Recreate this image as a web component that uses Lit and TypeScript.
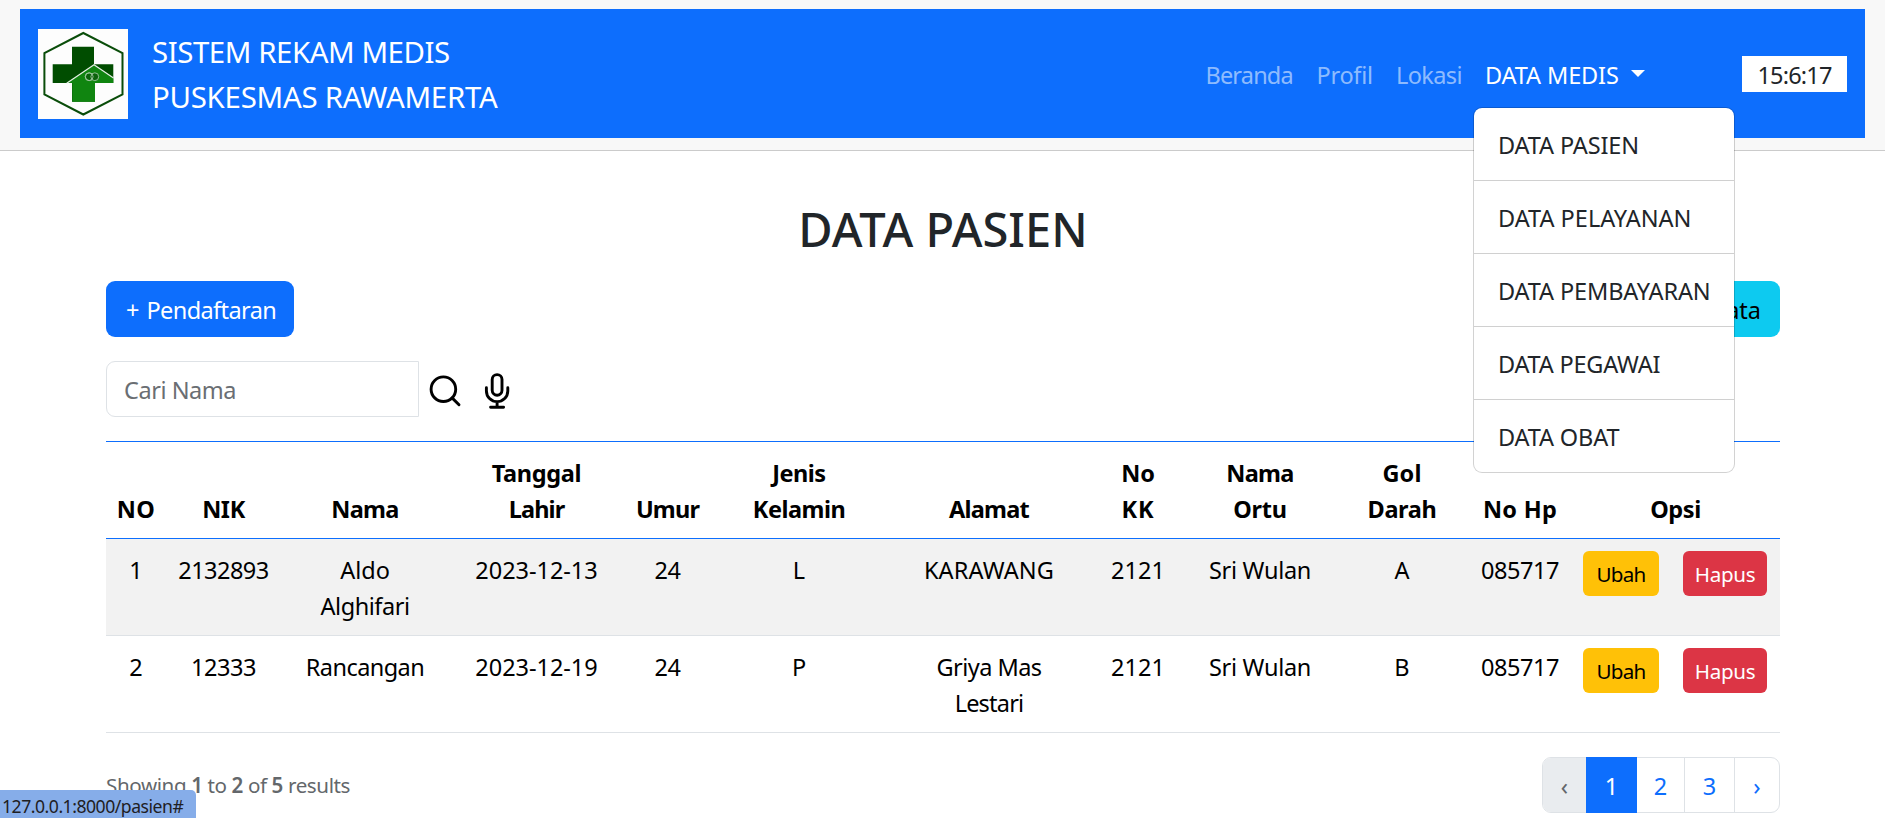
import { LitElement, html, css, nothing } from "lit";
import { customElement } from "lit/decorators.js";
import { styleMap } from "lit/directives/style-map.js";

// Tracking (px) per label, so that each one keeps its intended width.
const TRACKING: Record<string, number> = {
  "SISTEM REKAM MEDIS": -0.44, "PUSKESMAS RAWAMERTA": -0.26,
  Beranda: -0.83, Profil: -0.27, Lokasi: -0.61, "DATA MEDIS": -0.13, "15:6:17": -0.82,
  "DATA PASIEN": -0.13, "DATA PELAYANAN": 0, "DATA PEMBAYARAN": -0.13,
  "DATA PEGAWAI": -0.22, "DATA OBAT": -0.15, Pendaftaran: -0.6, "Cari Nama": -0.45,
  NO: 0.3, NIK: -0.38, Nama: -0.71, Tanggal: -0.31, Lahir: -0.89, Umur: -0.83,
  Jenis: -0.53, Kelamin: -0.5, Alamat: -0.78, No: -0.12, KK: 0.9, Ortu: -0.27,
  Gol: 0.14, Darah: -0.36, "No Hp": 0.3, Opsi: -0.42,
  "2132893": -0.53, "12333": -0.45, Aldo: -0.02, Alghifari: -0.46, Rancangan: -0.56,
  "2023-12-13": -0.03, "2023-12-19": -0.03, "24": -0.45, KARAWANG: 0.12,
  "Griya Mas": -0.53, Lestari: -0.79, "2121": 0, "Sri Wulan": -0.28, "085717": -0.45,
  Ubah: -0.7, Hapus: -0.29, "127.0.0.1:8000/pasien#": -0.48,
};

const label = (text: string) =>
  html`<span style=${styleMap({ letterSpacing: `${TRACKING[text] ?? 0}px` })}>${text}</span>`;

const lines = (items: string[]) => items.map((t, i) => html`${i ? html`<br />` : nothing}${label(t)}`);

const COLUMNS: { head: string[]; width: number }[] = [
  { head: ["NO"], width: 60 },
  { head: ["NIK"], width: 115 },
  { head: ["Nama"], width: 168 },
  { head: ["Tanggal", "Lahir"], width: 175 },
  { head: ["Umur"], width: 87 },
  { head: ["Jenis", "Kelamin"], width: 176 },
  { head: ["Alamat"], width: 204 },
  { head: ["No", "KK"], width: 94 },
  { head: ["Nama", "Ortu"], width: 150 },
  { head: ["Gol", "Darah"], width: 134 },
  { head: ["No Hp"], width: 102 },
  { head: ["Opsi"], width: 209 },
];

const ROWS: string[][][] = [
  [["1"], ["2132893"], ["Aldo", "Alghifari"], ["2023-12-13"], ["24"], ["L"], ["KARAWANG"], ["2121"], ["Sri Wulan"], ["A"], ["085717"]],
  [["2"], ["12333"], ["Rancangan"], ["2023-12-19"], ["24"], ["P"], ["Griya Mas", "Lestari"], ["2121"], ["Sri Wulan"], ["B"], ["085717"]],
];

const MENU = ["DATA PASIEN", "DATA PELAYANAN", "DATA PEMBAYARAN", "DATA PEGAWAI", "DATA OBAT"];

@customElement("app-navbar")
class AppNavbar extends LitElement {
  static styles = css`
    :host { display: block; }
    .header {
      box-sizing: border-box; height: 151px; padding: 9px 20px 12px;
      background: #f8f8f8; border-bottom: 1px solid #cbcbcb;
    }
    .bar {
      box-sizing: border-box; height: 129px; padding: 20px 18px 0; display: flex;
      align-items: flex-start; background: #0d6efd; color: #fff;
    }
    .logo { display: block; width: 90px; height: 90px; }
    .brand { margin: 1px 0 0 24px; flex: 1; font-size: 29.4px; line-height: 45px; white-space: nowrap; }
    .nav { display: grid; grid-template-columns: 111px 79.5px 89px 161px; margin-top: 28px; line-height: 36px; white-space: nowrap; }
    .link { color: rgba(255, 255, 255, 0.55); }
    .active { position: relative; display: flex; align-items: flex-start; }
    .caret { margin: 13px 0 0 12px; border: 7px solid transparent; border-top-color: #fff; border-bottom: 0; }
    .clock { margin: 27px 0 0 96px; width: 105px; height: 36px; line-height: 38px; background: #fff; color: #212529; text-align: center; }
    .menu {
      position: absolute; z-index: 5; top: 50px; left: -12px; box-sizing: border-box; width: 262px;
      background: #fff; background-clip: padding-box; border: 1px solid rgba(0, 0, 0, 0.175);
      border-radius: 9px; color: #212529;
    }
    .item { padding: 19px 20px 17px 24px; border-bottom: 1px solid #d0d0d0; }
    .item:last-child { border-bottom: 0; }
  `;

  render() {
    return html`
      <header class="header">
        <div class="bar">
          <svg class="logo" viewBox="0 0 90 90">
            <rect width="90" height="90" fill="#fdfdfd" />
            <path d="M45.3 4 84.5 24.2V65.3L45.3 85.5 6.4 65.3V24.2Z" fill="none" stroke="#0a4d0a" stroke-width="2" />
            <path d="M34 17.7H56V35.2H75.3V54H57V72.7H34V54H14.7V35.2H34Z" fill="#004d00" />
            <path d="M29.7 54 56 36 75.3 49.5V54H57V72.7H34.3V54Z" fill="#108510" />
            <path d="M28.7 54.2 56 35.7 75.5 49" fill="none" stroke="#e4f1e4" stroke-width="1.3" />
            <g fill="none" stroke="#9fc79f" stroke-width="0.9">
              <circle cx="51.2" cy="47.7" r="3.9" fill="#0b620b" />
              <circle cx="56.8" cy="47.7" r="3.9" fill="#0b620b" />
              <circle cx="51.2" cy="47.7" r="3.9" />
            </g>
          </svg>
          <div class="brand">${lines(["SISTEM REKAM MEDIS", "PUSKESMAS RAWAMERTA"])}</div>
          <nav class="nav">
            <a class="link">${label("Beranda")}</a>
            <a class="link">${label("Profil")}</a>
            <a class="link">${label("Lokasi")}</a>
            <div class="active">
              ${label("DATA MEDIS")}<i class="caret"></i>
              <div class="menu">${MENU.map((m) => html`<div class="item">${label(m)}</div>`)}</div>
            </div>
          </nav>
          <div class="clock">${label("15:6:17")}</div>
        </div>
      </header>
    `;
  }
}

@customElement("patient-table")
class PatientTable extends LitElement {
  static styles = css`
    :host { display: block; }
    .table { width: 1674px; table-layout: fixed; border-collapse: separate; border-spacing: 0; border-top: 1px solid #0d6efd; color: #000; line-height: 36px; text-align: center; }
    .cell { box-sizing: border-box; height: 97px; padding: 13px 0 11px; vertical-align: top; border-bottom: 1px solid #dee2e6; white-space: nowrap; }
    .head { vertical-align: bottom; font-weight: 700; border-bottom-color: #0d6efd; }
    .row:nth-child(odd) .cell { background: #f2f2f2; }
    .actions { padding: 12px 13px 0 12px; }
    .buttons { display: flex; justify-content: space-between; }
    .button { box-sizing: border-box; height: 45px; border-radius: 6px; font-size: 20.6px; line-height: 46px; }
    .edit { width: 76px; background: #ffc107; color: #000; }
    .delete { width: 84px; background: #dc3545; color: #fff; }
  `;

  render() {
    return html`
      <table class="table">
        <colgroup>${COLUMNS.map((c) => html`<col style=${styleMap({ width: `${c.width}px` })} />`)}</colgroup>
        <thead><tr>${COLUMNS.map((c) => html`<th class="cell head">${lines(c.head)}</th>`)}</tr></thead>
        <tbody>
          ${ROWS.map((row) => html`
            <tr class="row">
              ${row.map((cell) => html`<td class="cell">${lines(cell)}</td>`)}
              <td class="cell actions">
                <div class="buttons">
                  <div class="button edit">${label("Ubah")}</div>
                  <div class="button delete">${label("Hapus")}</div>
                </div>
              </td>
            </tr>`)}
        </tbody>
      </table>
    `;
  }
}

@customElement("app-root")
class AppRoot extends LitElement {
  static styles = css`
    :host {
      display: block; position: relative; height: 818px; overflow: hidden; background: #fff; color: #212529;
      font: 23.5px/36px "Noto Sans", "Open Sans", sans-serif;
    }
    .content { width: 1674px; margin-left: 106px; }
    .title { margin: 0; padding: 49px 0 23px; font-size: 47px; line-height: 58px; font-weight: 500; text-align: center; }
    .toolbar { display: flex; justify-content: space-between; height: 56px; line-height: 58px; }
    .primary { box-sizing: border-box; width: 188px; display: flex; gap: 7px; padding-left: 20px; border-radius: 9px; background: #0d6efd; color: #fff; }
    .export { padding: 0 19px 0 22px; border-radius: 9px; background: #0dcaf0; color: #000; }
    .search { display: flex; align-items: center; height: 56px; margin: 24px 0; }
    .field { box-sizing: border-box; width: 313px; height: 56px; padding-left: 17px; border: 1px solid #dee2e6; border-radius: 9px 0 0 9px; color: #6a6e73; line-height: 57px; }
    .icon { width: 40px; height: 40px; margin-left: 7px; fill: none; stroke: #000; stroke-width: 2.9; stroke-linecap: round; }
    .mic { margin-left: 12px; }
    .footer { display: flex; justify-content: space-between; align-items: flex-start; margin-top: 24px; }
    .summary { margin-top: 10px; font-size: 20.6px; color: #63676b; letter-spacing: -0.4px; }
    .strong { font-weight: 600; }
    .pager { display: flex; box-sizing: border-box; width: 238px; height: 56px; border: 1px solid #dee2e6; border-radius: 9px; line-height: 57px; text-align: center; color: #0d6efd; }
    .page { box-sizing: border-box; height: 54px; }
    .prev { width: 43px; background: #e9ecef; color: #63676b; border-radius: 8px 0 0 8px; }
    .current { width: 51px; height: 56px; margin: -1px 0; line-height: 59px; background: #0d6efd; color: #fff; }
    .two { width: 48px; border-right: 1px solid #dee2e6; }
    .three { width: 50px; border-right: 1px solid #dee2e6; }
    .next { flex: 1; }
    .status { position: absolute; left: 0; bottom: 0; box-sizing: border-box; width: 196px; height: 28px; padding-left: 2px; border-radius: 0 5px 0 0; background: #86ade9; color: #1f2023; font-size: 17.6px; line-height: 33px; white-space: nowrap; }
  `;

  render() {
    return html`
      <app-navbar></app-navbar>
      <main class="content">
        <h1 class="title">DATA PASIEN</h1>
        <div class="toolbar">
          <div class="primary"><span>+</span>${label("Pendaftaran")}</div>
          <div class="export">Data</div>
        </div>
        <div class="search">
          <div class="field">${label("Cari Nama")}</div>
          <svg class="icon" viewBox="0 0 40 40"><circle cx="17.4" cy="20.2" r="12.3" /><path d="M26.3 29.1 33 35.8" /></svg>
          <svg class="icon mic" viewBox="0 0 40 40">
            <rect x="14.2" y="5.6" width="9.8" height="20.6" rx="4.9" />
            <path d="M8.4 18.7V21.9a10.7 10.7 0 0 0 21.4 0V18.7M19.1 32.6V38.2M12.6 38.2H25.6" />
          </svg>
        </div>
        <patient-table></patient-table>
        <div class="footer">
          <div class="summary">Showing <span class="strong">1</span> to <span class="strong">2</span> of <span class="strong">5</span> results</div>
          <div class="pager">
            <div class="page prev">‹</div>
            <div class="page current">1</div>
            <div class="page two">2</div>
            <div class="page three">3</div>
            <div class="page next">›</div>
          </div>
        </div>
      </main>
      <div class="status">${label("127.0.0.1:8000/pasien#")}</div>
    `;
  }
}
